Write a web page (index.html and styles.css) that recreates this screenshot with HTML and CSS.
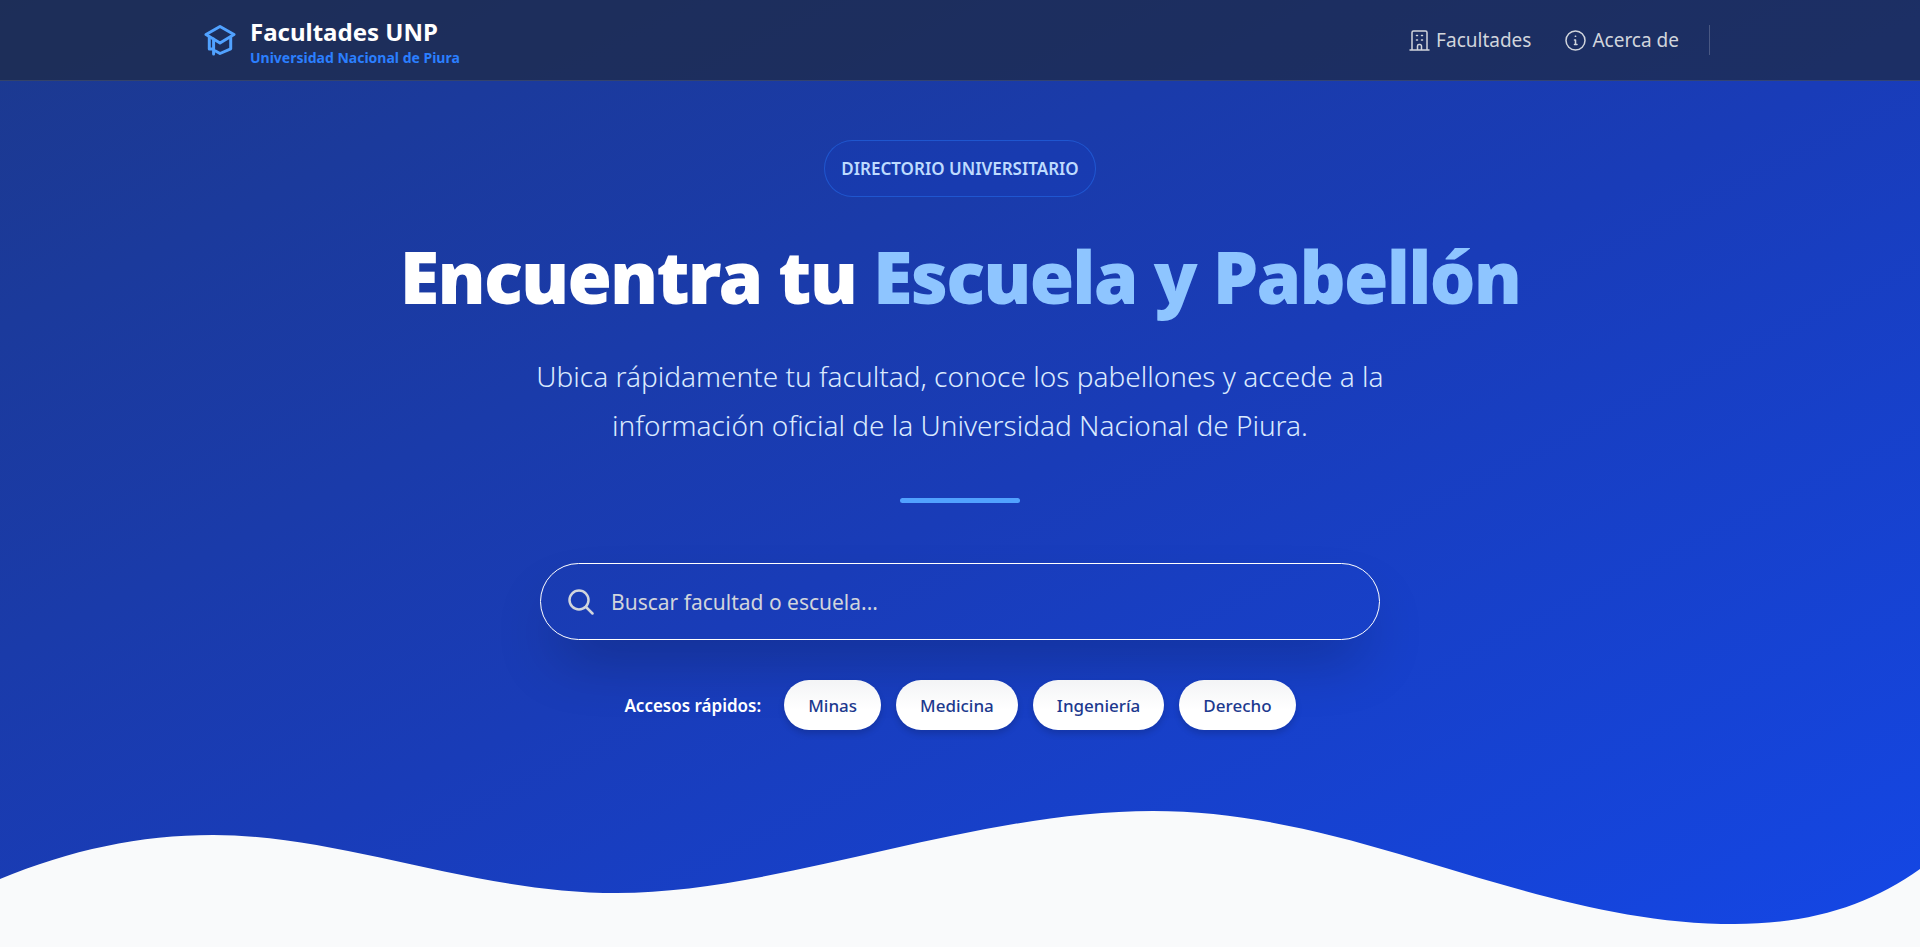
FILE: index.html
```html
<!DOCTYPE html>
<html lang="es">
<head>
  <meta charset="UTF-8" />
  <meta name="viewport" content="width=device-width, initial-scale=1.0">
  <title>Facultades UNP</title>
  <link rel="stylesheet" href="styles.css">
</head>
<body>
  <header class="site-header">
    <div class="header-inner">
      <a class="brand" href="#">
        <svg class="brand-icon" viewBox="0 0 32 32" aria-hidden="true">
          <path d="M2 10.500 16 2.500l14 8L16 19z" />
          <path d="M5.300 13v12h4M26.700 13v11.800L16 29.500l-4.500-2.500M9.600 15v15" />
        </svg>
        <span class="brand-text">
          <span class="brand-name">Facultades UNP</span>
          <span class="brand-sub">Universidad Nacional de Piura</span>
        </span>
      </a>
      <nav class="main-nav">
        <div class="nav-links">
          <a href="#facultades">
            <svg class="nav-icon" viewBox="0 0 21 21" aria-hidden="true">
              <path d="M1 20h19M3 20V2.500A1.500 1.500 0 0 1 4.500 1h12A1.500 1.500 0 0 1 18 2.500V20M8.500 20v-4a1.500 1.500 0 0 1 1.500-1.500h1a1.500 1.500 0 0 1 1.500 1.500v4" />
              <path d="M7.500 5.500h1M12.500 5.500h1M7.500 10h1M12.500 10h1" />
            </svg>
            Facultades
          </a>
          <a href="#acerca">
            <svg class="nav-icon" viewBox="0 0 21 21" aria-hidden="true">
              <circle cx="10.500" cy="10.500" r="9.500" />
              <path d="M9.500 10h1v4.500M9.500 14.500h2.500M10.300 6.300h.4" />
            </svg>
            Acerca de
          </a>
        </div>
        <span class="nav-divider"></span>
      </nav>
    </div>
  </header>

  <main class="hero">
    <div class="hero-content">
      <span class="badge">DIRECTORIO UNIVERSITARIO</span>
      <h1>Encuentra tu <span>Escuela y Pabellón</span></h1>
      <p class="lead">Ubica rápidamente tu facultad, conoce los pabellones y accede a la información oficial de la Universidad Nacional de Piura.</p>
      <div class="separator"></div>
      <form class="search" role="search">
        <label for="searchInput" aria-label="Buscar">
          <svg class="search-icon" viewBox="0 0 26 26" aria-hidden="true">
            <circle cx="11" cy="11" r="9.500" />
            <path d="M18 18l6.500 6.500" />
          </svg>
        </label>
        <input type="search" id="searchInput" placeholder="Buscar facultad o escuela...">
      </form>
      <div class="quick-links">
        <span class="quick-label">Accesos rápidos:</span>
        <button type="button">Minas</button>
        <button type="button">Medicina</button>
        <button type="button">Ingeniería</button>
        <button type="button">Derecho</button>
      </div>
    </div>
    <svg class="wave" viewBox="0 0 1920 140" preserveAspectRatio="none" aria-hidden="true">
      <path d="M0 72C70 43 140 28 213 28C342 28 473 86 617 86C780 86 970 4 1153 4C1360 4 1530 117 1735 117C1810 117 1870 98 1920 62V140H0Z" />
    </svg>
  </main>
</body>
</html>
```

FILE: styles.css
```css
* {
  box-sizing: border-box;
}
html, body {
  margin: 0;
  padding: 0;
}
body {
  min-height: 100vh;
  display: flex;
  flex-direction: column;
  font-family: 'Segoe UI', 'Noto Sans', sans-serif;
  color: #fff;
  background: linear-gradient(to bottom right, #1c398e, #193cb8 52%, #1447e6);
}
a {
  color: inherit;
  text-decoration: none;
}
svg {
  display: block;
  fill: none;
  stroke: currentColor;
  stroke-linecap: round;
  stroke-linejoin: round;
}

/* Header */
.site-header {
  background: rgba(30, 41, 65, 0.7);
  border-bottom: 1px solid rgba(255, 255, 255, 0.1);
}
.header-inner {
  max-width: 1512px;
  height: 80px;
  margin: 0 auto;
  display: flex;
  align-items: center;
  justify-content: space-between;
}
.brand {
  display: flex;
  align-items: center;
  gap: 14px;
}
.brand-icon {
  width: 32px;
  height: 32px;
  color: #51a2ff;
  stroke-width: 3;
}
.brand-text {
  display: flex;
  flex-direction: column;
  padding-top: 6px;
}
.brand-name {
  font-size: 24px;
  font-weight: 700;
  line-height: 30px;
}
.brand-sub {
  color: #2b7fff;
  font-size: 14px;
  font-weight: 700;
  line-height: 22px;
}
.main-nav {
  display: flex;
  align-items: center;
  gap: 30px;
  color: #d1d5dc;
  font-size: 19px;
}
.nav-links {
  display: flex;
  gap: 34px;
}
.nav-links a {
  display: flex;
  align-items: center;
  gap: 6px;
}
.nav-icon {
  width: 21px;
  height: 21px;
  stroke-width: 1.5;
}
.nav-divider {
  width: 1px;
  height: 30px;
  margin-right: 6px;
  background: rgba(255, 255, 255, 0.2);
}

/* Hero */
.hero {
  flex: 1;
  display: flex;
  flex-direction: column;
  justify-content: space-between;
}
.hero-content {
  display: flex;
  flex-direction: column;
  align-items: center;
  padding: 59px 20px 0;
}
.badge {
  padding: 15px 16px;
  border: 1px solid rgba(43, 127, 255, 0.4);
  border-radius: 30px;
  background: rgba(21, 60, 200, 0.2);
  color: #bedbff;
  font-size: 17px;
  font-weight: 600;
  line-height: 25px;
}
h1 {
  margin: 34px 0 31px;
  font-size: 72px;
  font-weight: 900;
  line-height: 90px;
  letter-spacing: -0.025em;
  text-align: center;
}
h1 span {
  color: #8ec5ff;
}
.lead {
  max-width: 880px;
  margin: 0;
  color: #dbeafe;
  font-size: 28px;
  font-weight: 300;
  line-height: 49px;
  text-align: center;
}
.separator {
  width: 120px;
  height: 5px;
  margin: 48px 0 60px;
  border-radius: 4px;
  background: #51a2ff;
}
.search {
  width: 100%;
  max-width: 840px;
  height: 77px;
  display: flex;
  align-items: center;
  gap: 17px;
  padding: 0 27px;
  border: 1px solid #fff;
  border-radius: 40px;
  color: #d1d5dc;
  box-shadow: 0 30px 60px -15px rgba(0, 0, 0, 0.25);
}
.search-icon {
  width: 26px;
  height: 26px;
  stroke-width: 2.5;
}
.search input {
  flex: 1;
  min-width: 0;
  padding: 0;
  border: none;
  outline: none;
  background: transparent;
  color: #fff;
  font-family: inherit;
  font-size: 21px;
}
.search input::placeholder {
  color: #d1d5dc;
}
.quick-links {
  display: flex;
  flex-wrap: wrap;
  align-items: center;
  justify-content: center;
  gap: 15px;
  margin-top: 40px;
  font-size: 17px;
}
.quick-label {
  margin-right: 8px;
  font-weight: 600;
}
.quick-links button {
  height: 50px;
  padding: 0 24px;
  border: none;
  border-radius: 25px;
  background: linear-gradient(#f3f4f6, #fff 60%);
  color: #1c398e;
  font-family: inherit;
  font-size: 17px;
  font-weight: 500;
  cursor: pointer;
  box-shadow: 0 4px 6px rgba(0, 0, 0, 0.15);
}
.wave {
  width: 100%;
  height: 140px;
}
.wave path {
  fill: #f9fafb;
  stroke: none;
}

@media (max-width: 900px) {
  .header-inner {
    padding: 0 20px;
  }
  h1 {
    font-size: 48px;
    line-height: 60px;
  }
  .lead {
    font-size: 22px;
    line-height: 36px;
  }
}
```
